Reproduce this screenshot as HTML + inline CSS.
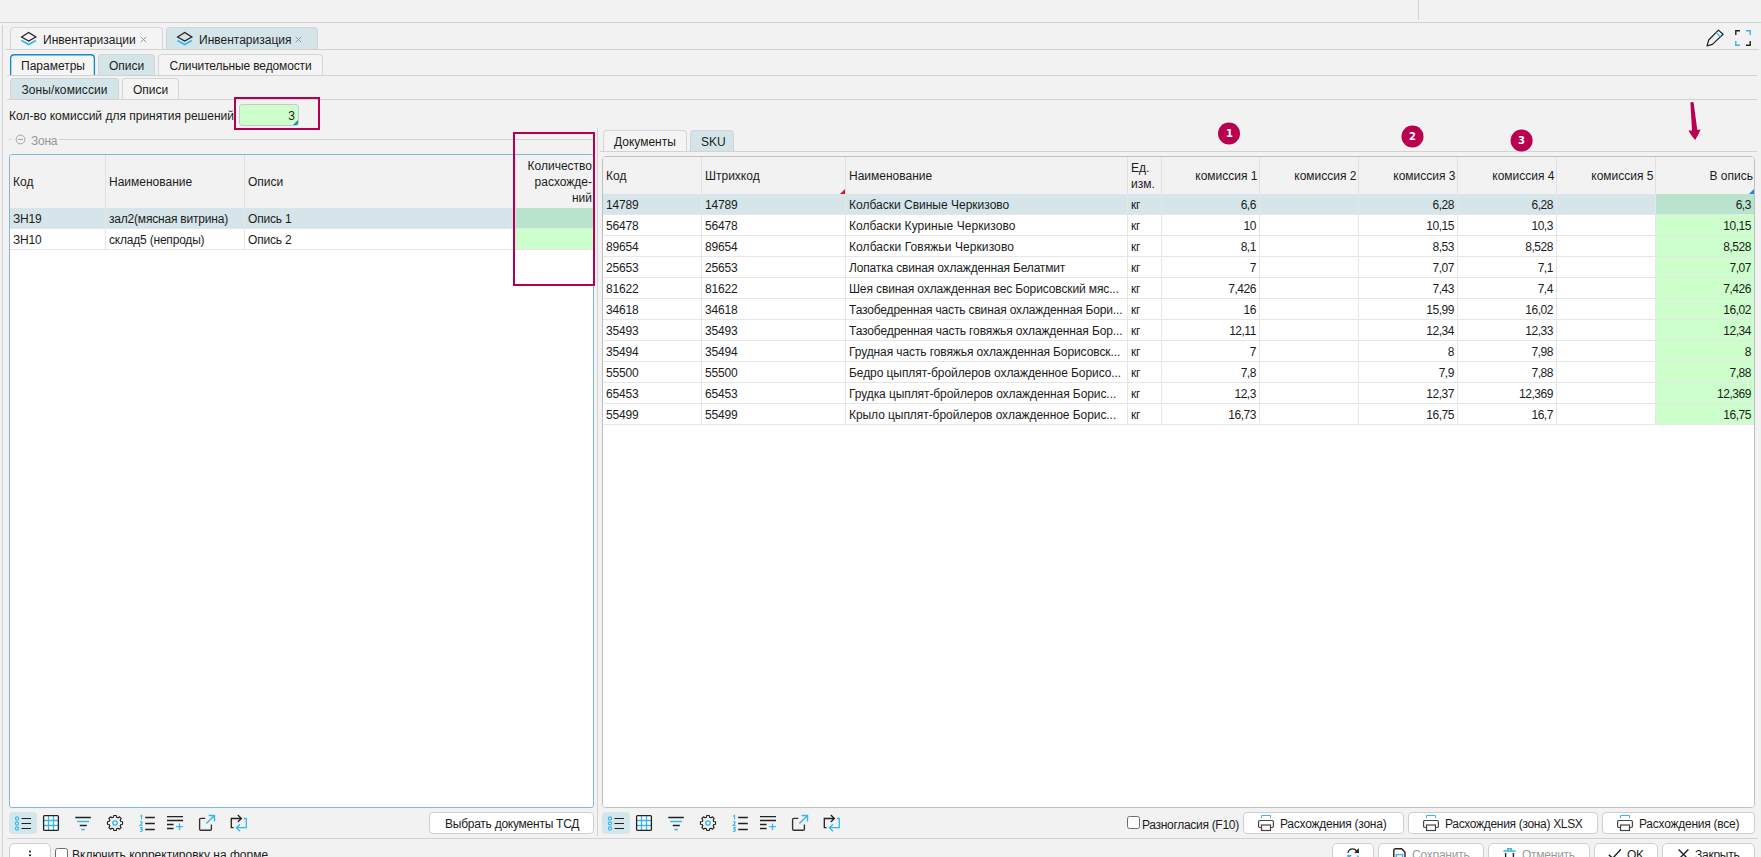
<!DOCTYPE html>
<html lang="ru"><head><meta charset="utf-8"><title>Инвентаризация</title>
<style>
*{box-sizing:border-box;margin:0;padding:0}
html,body{width:1761px;height:857px;overflow:hidden;background:#f2f2f2}
body{position:relative;font-family:"Liberation Sans",sans-serif;font-size:12px;color:#1c1c1c;line-height:14px}
.a{position:absolute}
svg{position:absolute;overflow:visible}
.hl{position:absolute;height:1px;background:#d2d2d2}
.vl{position:absolute;width:1px;background:#d2d2d2}
.tab{position:absolute;border:1px solid #d6d6d6;border-bottom:none;border-radius:4px 4px 0 0;background:#f4f4f4;white-space:nowrap}
.tab.sel{background:#d4e5ea;border-color:#d2d5d6}
.tab span.t{position:absolute;top:4px;white-space:nowrap}
.tab.ct{text-align:center}
.tab.ct span.t{left:0;right:0}
.grid{position:absolute;background:#fff;border-radius:3px;overflow:hidden}
.hd{position:absolute;left:0;top:0;right:0;background:#f2f2f2}
.hc{position:absolute;top:0;bottom:0;border-right:1px solid #e0e0e0;white-space:nowrap}
.hc span{position:absolute;left:3px;right:3px}
.r{position:absolute;left:0;right:0;height:21px;border-bottom:1px solid #e6e6e6;background:#fff}
.r.s{background:#d5e5ea}
.c{position:absolute;top:0;height:20px;border-right:1px solid #e6e6e6;padding:4px 3px 0 3px;white-space:nowrap;overflow:hidden;line-height:14px;letter-spacing:-0.2px}
.c.n{text-align:right;letter-spacing:-0.5px;padding-right:3.2px}
.g{background:#ccffcc}
.r.s .g{background:#b9e3cd}
.btn{position:absolute;background:#fff;border:1px solid #cfcfcf;border-radius:4px;white-space:nowrap}
.btn span{position:absolute;top:4px;white-space:nowrap;letter-spacing:-0.25px}
.b2{border-radius:5px}
.dis{color:#9a9a9a}
.cb{position:absolute;width:13px;height:13px;border:1px solid #6e6e6e;border-radius:2.5px;background:#fff}
.ann{fill:#b8004f}
.k{stroke:#222;fill:none;stroke-width:1.3}
.b{stroke:#35b6f0;fill:none;stroke-width:1.3}
</style></head><body>
<!-- frame lines -->
<div class="vl" style="left:1418px;top:0;height:20px"></div>
<div class="hl" style="left:0;top:22px;width:1761px"></div>
<div class="vl" style="left:2px;top:25px;height:832px"></div>

<!-- row 1 tabs -->
<div class="hl" style="left:5px;top:49px;width:1754px"></div>
<div class="tab" style="left:10px;top:27px;width:153px;height:22px"><svg style="left:9.4px;top:3.3px" width="17.4" height="15.5" viewBox="0 0 18 16"><path class="b" style="stroke-width:1.6" d="M1.5 9.8L9 14L16.5 9.8"/><path class="k" d="M1.6 6.2L9 1.6L16.4 6.2L9 10.4Z"/></svg><span class="t" style="left:32px;top:5px">Инвентаризации</span><svg style="left:129.2px;top:7.6px" width="7.2" height="7.2" viewBox="0 0 8 8"><path d="M0.8 0.8L7 7M7 0.8L0.8 7" stroke="#8c8c8c" stroke-width="1" fill="none"/></svg></div>
<div class="tab sel" style="left:166px;top:27px;width:152px;height:22px"><svg style="left:9.4px;top:3.3px" width="17.4" height="15.5" viewBox="0 0 18 16"><path class="b" style="stroke-width:1.6" d="M1.5 9.8L9 14L16.5 9.8"/><path class="k" d="M1.6 6.2L9 1.6L16.4 6.2L9 10.4Z"/></svg><span class="t" style="left:32px;top:5px">Инвентаризация</span><svg style="left:128.4px;top:7.6px" width="7.2" height="7.2" viewBox="0 0 8 8"><path d="M0.8 0.8L7 7M7 0.8L0.8 7" stroke="#8c8c8c" stroke-width="1" fill="none"/></svg></div>

<!-- top right icons -->
<svg style="left:1706px;top:29px" width="18" height="18" viewBox="0 0 18 18"><path class="k" style="stroke-width:1.2" d="M12.4 1.1L17.1 5.3L6.4 15.4L1 16.9L2.7 11Z" stroke-linejoin="round"/><path class="b" style="stroke-width:1.2" d="M10.2 3.6L14.5 8"/></svg>
<svg style="left:1735px;top:30px" width="16" height="16" viewBox="0 0 16 16"><path class="k" style="stroke-width:1.4" d="M0.8 5V0.8H5M15.2 11V15.2H11"/><path class="b" style="stroke-width:1.4" d="M11 0.8H15.2V5M5 15.2H0.8V11"/></svg>

<!-- row 2 tabs -->
<div class="hl" style="left:7px;top:75px;width:1750px"></div>
<div class="tab" style="left:10px;top:54px;width:85px;height:21px;border:none;background:none"><svg style="left:0;top:0" width="85" height="21" viewBox="0 0 85 21"><path d="M0.65 21V4.4Q0.65 0.7 4.4 0.7H80.6Q84.4 0.7 84.4 4.4V21" fill="#f5f5f5" stroke="#148cc0" stroke-width="1.35"/></svg><span class="t" style="left:11px;top:5px">Параметры</span></div>
<div class="tab sel ct" style="left:98px;top:54px;width:57px;height:21px"><span class="t">Описи</span></div>
<div class="tab ct" style="left:158px;top:54px;width:165px;height:21px"><span class="t" style="letter-spacing:-0.13px">Сличительные ведомости</span></div>

<!-- row 3 tabs -->
<div class="hl" style="left:7px;top:99px;width:1750px"></div>
<div class="tab sel ct" style="left:10px;top:78px;width:109px;height:21px"><span class="t" style="letter-spacing:0.1px">Зоны/комиссии</span></div>
<div class="tab ct" style="left:122px;top:78px;width:57px;height:21px"><span class="t">Описи</span></div>

<!-- commission count -->
<div class="a" style="left:9px;top:109px;white-space:nowrap">Кол-во комиссий для принятия решений</div>
<div class="a" style="left:239px;top:104px;width:60px;height:22px;background:#ccffcc;border:1px solid #c9c9c9;border-radius:3px;overflow:hidden"><span class="a" style="right:3px;top:4px">3</span><svg style="right:0;bottom:0" width="5" height="5"><path d="M5 0V5H0Z" fill="#1e88c7"/></svg></div>
<!-- group "Зона" -->
<div class="hl" style="left:9px;top:139px;width:2px"></div>
<div class="hl" style="left:59px;top:139px;width:535px"></div>
<svg style="left:15px;top:134px" width="11" height="11" viewBox="0 0 11 11"><circle cx="5.5" cy="5.5" r="4.4" fill="none" stroke="#a6a6a6" stroke-width="1"/><path d="M3 5.5H8" stroke="#a6a6a6" stroke-width="1"/></svg>
<div class="a" style="left:31px;top:134px;color:#969696;letter-spacing:-0.25px">Зона</div>

<!-- left grid -->
<div class="a" style="left:9px;top:154px;width:585px;height:654px;border:1px solid #7fb9d2;border-radius:3px;background:#fff"></div>
<div class="grid" style="left:10px;top:155px;width:583px;height:652px">
 <div class="hd" style="height:53px">
  <div class="hc" style="left:0;width:96px"><span style="top:20px">Код</span></div>
  <div class="hc" style="left:96px;width:139px"><span style="top:20px">Наименование</span></div>
  <div class="hc" style="left:235px;width:271px"><span style="top:20px">Описи</span></div>
  <div class="hc" style="left:506px;width:77px;border-right:none"><span style="top:3px;line-height:16px;text-align:right;white-space:normal;right:1px">Количество расхожде-<br>ний</span></div>
 </div>
 <div class="r s" style="top:53px"><div class="c" style="left:0;width:96px">ЗН19</div><div class="c" style="left:96px;width:139px">зал2(мясная витрина)</div><div class="c" style="left:235px;width:271px">Опись 1</div><div class="c g" style="left:506px;width:77px;border-right:none"></div></div>
 <div class="r" style="top:74px"><div class="c" style="left:0;width:96px">ЗН10</div><div class="c" style="left:96px;width:139px">склад5 (непроды)</div><div class="c" style="left:235px;width:271px">Опись 2</div><div class="c g" style="left:506px;width:77px;border-right:none"></div></div>
</div>

<!-- left toolbar -->
<div class="a" style="left:9px;top:812px;width:250px;height:22px">
<div class="a" style="left:0;top:0;width:28px;height:22px;background:#d3e6eb;border-radius:4px"></div>
<svg style="left:0;top:0" width="250" height="22" viewBox="0 0 250 22">
<!-- list -->
<g class="b" style="stroke-width:1.1"><circle cx="8" cy="6.5" r="1.6"/><circle cx="8" cy="11.5" r="1.6"/><circle cx="8" cy="16.5" r="1.6"/></g>
<path class="k" style="stroke-width:1.15" d="M12.5 6.5H22M12.5 11.5H22M12.5 16.5H22"/>
<!-- grid -->
<rect x="34.6" y="3.6" width="14.8" height="14.8" rx="1" fill="#fff" stroke="none"/>
<path class="b" d="M39.5 4V18M44.5 4V18M35 8.5H49M35 13.5H49"/>
<rect class="k" x="34.6" y="3.6" width="14.8" height="14.8" rx="1"/>
<!-- filter -->
<path class="k" d="M66.3 5.5H81.8M70.8 13.5H77.8"/><path class="b" d="M68.2 9.5H80M72.3 17.5H75.8"/>
<!-- gear -->
<path class="k" stroke-linejoin="round" style="stroke-width:1.15" d="M104.46 5.20L104.81 3.49L107.19 3.49L107.54 5.20L109.01 5.81L110.47 4.85L112.15 6.53L111.19 7.99L111.80 9.46L113.51 9.81L113.51 12.19L111.80 12.54L111.19 14.01L112.15 15.47L110.47 17.15L109.01 16.19L107.54 16.80L107.19 18.51L104.81 18.51L104.46 16.80L102.99 16.19L101.53 17.15L99.85 15.47L100.81 14.01L100.20 12.54L98.49 12.19L98.49 9.81L100.20 9.46L100.81 7.99L99.85 6.53L101.53 4.85L102.99 5.81Z"/>
<circle class="b" cx="106" cy="11" r="2.2" style="stroke-width:1.3"/>
<!-- numbered -->
<path class="k" d="M136.2 5.5H145.8M136.2 11.5H145.8M136.2 17.5H145.8"/>
<path class="b" style="stroke-width:1.1" d="M131.3 4.4L132.6 3.4V7.6M131.2 10.2Q132.4 9 133.2 10.2Q133.4 11.2 131.2 13.4H133.6M131.2 15.6H133.2L132.2 17.2Q133.6 17.4 133.3 18.6Q132.6 19.8 131.1 19.2"/>
<!-- lines plus -->
<path class="k" d="M158 4.6H174M158 8.5H174M158 12.5H164.6M158 16.5H164.6"/><path class="b" d="M167.2 14.7H173.8M170.5 11.4V18"/>
<!-- export -->
<path class="k" style="stroke-width:1.35;stroke:#333" d="M196.3 6.4H191.8Q190.6 6.4 190.6 7.6V17Q190.6 18.2 191.8 18.2H201.2Q202.4 18.2 202.4 17V12.4"/>
<path class="b" style="stroke-width:1.4" d="M197.4 11.6L205.2 3.8M199.6 3.5H205.5V9.4"/>
<!-- repeat -->
<path class="k" d="M224.6 15.7H222.3V6.5H232.2M228.8 3L232.4 6.5L228.8 10"/>
<path class="b" d="M235 6.5H237.3V15.7H227.6M231 12.2L227.4 15.7L231 19.2"/>
</svg>
</div>
<div class="btn" style="left:429px;top:812px;width:165px;height:22px"><span style="left:15px">Выбрать документы ТСД</span></div>
<!-- right tabs -->
<div class="hl" style="left:600px;top:151px;width:1157px"></div>
<div class="tab" style="left:603px;top:130px;width:84px;height:21px"><span class="t" style="left:10px">Документы</span></div>
<div class="tab sel" style="left:690px;top:130px;width:44px;height:21px"><span class="t" style="left:10px">SKU</span></div>
<!-- right grid -->
<div class="a" style="left:602px;top:156px;width:1153px;height:652px;border:1px solid #bfbfbf;border-radius:4px;background:#fff"></div>
<div class="grid" style="left:603px;top:157px;width:1151px;height:650px">
 <div class="hd" style="height:37px">
  <div class="hc" style="left:0px;width:99px"><span style="top:12px">Код</span></div>
  <div class="hc" style="left:99px;width:144px"><span style="top:12px">Штрихкод</span><svg style="right:0;bottom:0" width="5" height="5"><path d="M5 0V5H0Z" fill="#e8101c"/></svg></div>
  <div class="hc" style="left:243px;width:282px"><span style="top:12px">Наименование</span></div>
  <div class="hc" style="left:525px;width:34px"><span style="top:3px;line-height:16px">Ед.<br>изм.</span></div>
  <div class="hc" style="left:559px;width:98px"><span style="top:12px;text-align:right;right:1.5px">комиссия 1</span></div>
  <div class="hc" style="left:657px;width:99px"><span style="top:12px;text-align:right;right:1.5px">комиссия 2</span></div>
  <div class="hc" style="left:756px;width:99px"><span style="top:12px;text-align:right;right:1.5px">комиссия 3</span></div>
  <div class="hc" style="left:855px;width:99px"><span style="top:12px;text-align:right;right:1.5px">комиссия 4</span></div>
  <div class="hc" style="left:954px;width:99px"><span style="top:12px;text-align:right;right:1.5px">комиссия 5</span></div>
  <div class="hc" style="left:1053px;width:98px;border-right:none"><span style="top:12px;text-align:right;right:1px">В опись</span><svg style="right:0;bottom:0" width="5" height="5"><path d="M5 0V5H0Z" fill="#1e88c7"/></svg></div>
 </div>
 <div class="r s" style="top:37px"><div class="c" style="left:0px;width:99px">14789</div><div class="c" style="left:99px;width:144px">14789</div><div class="c nm" style="left:243px;width:282px;letter-spacing:0.0px">Колбаски Свиные Черкизово</div><div class="c" style="left:525px;width:34px">кг</div><div class="c n" style="left:559px;width:98px">6,6</div><div class="c n" style="left:657px;width:99px"></div><div class="c n" style="left:756px;width:99px">6,28</div><div class="c n" style="left:855px;width:99px">6,28</div><div class="c n" style="left:954px;width:99px"></div><div class="c n g" style="left:1053px;width:98px;border-right:none">6,3</div></div>
 <div class="r" style="top:58px"><div class="c" style="left:0px;width:99px">56478</div><div class="c" style="left:99px;width:144px">56478</div><div class="c nm" style="left:243px;width:282px;letter-spacing:0.07px">Колбаски Куриные Черкизово</div><div class="c" style="left:525px;width:34px">кг</div><div class="c n" style="left:559px;width:98px">10</div><div class="c n" style="left:657px;width:99px"></div><div class="c n" style="left:756px;width:99px">10,15</div><div class="c n" style="left:855px;width:99px">10,3</div><div class="c n" style="left:954px;width:99px"></div><div class="c n g" style="left:1053px;width:98px;border-right:none">10,15</div></div>
 <div class="r" style="top:79px"><div class="c" style="left:0px;width:99px">89654</div><div class="c" style="left:99px;width:144px">89654</div><div class="c nm" style="left:243px;width:282px;letter-spacing:0.09px">Колбаски Говяжьи Черкизово</div><div class="c" style="left:525px;width:34px">кг</div><div class="c n" style="left:559px;width:98px">8,1</div><div class="c n" style="left:657px;width:99px"></div><div class="c n" style="left:756px;width:99px">8,53</div><div class="c n" style="left:855px;width:99px">8,528</div><div class="c n" style="left:954px;width:99px"></div><div class="c n g" style="left:1053px;width:98px;border-right:none">8,528</div></div>
 <div class="r" style="top:100px"><div class="c" style="left:0px;width:99px">25653</div><div class="c" style="left:99px;width:144px">25653</div><div class="c nm" style="left:243px;width:282px;letter-spacing:-0.163px">Лопатка свиная охлажденная Белатмит</div><div class="c" style="left:525px;width:34px">кг</div><div class="c n" style="left:559px;width:98px">7</div><div class="c n" style="left:657px;width:99px"></div><div class="c n" style="left:756px;width:99px">7,07</div><div class="c n" style="left:855px;width:99px">7,1</div><div class="c n" style="left:954px;width:99px"></div><div class="c n g" style="left:1053px;width:98px;border-right:none">7,07</div></div>
 <div class="r" style="top:121px"><div class="c" style="left:0px;width:99px">81622</div><div class="c" style="left:99px;width:144px">81622</div><div class="c nm" style="left:243px;width:282px;letter-spacing:-0.124px">Шея свиная охлажденная вес Борисовский мяс...</div><div class="c" style="left:525px;width:34px">кг</div><div class="c n" style="left:559px;width:98px">7,426</div><div class="c n" style="left:657px;width:99px"></div><div class="c n" style="left:756px;width:99px">7,43</div><div class="c n" style="left:855px;width:99px">7,4</div><div class="c n" style="left:954px;width:99px"></div><div class="c n g" style="left:1053px;width:98px;border-right:none">7,426</div></div>
 <div class="r" style="top:142px"><div class="c" style="left:0px;width:99px">34618</div><div class="c" style="left:99px;width:144px">34618</div><div class="c nm" style="left:243px;width:282px;letter-spacing:-0.154px">Тазобедренная часть свиная охлажденная Бори...</div><div class="c" style="left:525px;width:34px">кг</div><div class="c n" style="left:559px;width:98px">16</div><div class="c n" style="left:657px;width:99px"></div><div class="c n" style="left:756px;width:99px">15,99</div><div class="c n" style="left:855px;width:99px">16,02</div><div class="c n" style="left:954px;width:99px"></div><div class="c n g" style="left:1053px;width:98px;border-right:none">16,02</div></div>
 <div class="r" style="top:163px"><div class="c" style="left:0px;width:99px">35493</div><div class="c" style="left:99px;width:144px">35493</div><div class="c nm" style="left:243px;width:282px;letter-spacing:-0.126px">Тазобедренная часть говяжья охлажденная Бор...</div><div class="c" style="left:525px;width:34px">кг</div><div class="c n" style="left:559px;width:98px">12,11</div><div class="c n" style="left:657px;width:99px"></div><div class="c n" style="left:756px;width:99px">12,34</div><div class="c n" style="left:855px;width:99px">12,33</div><div class="c n" style="left:954px;width:99px"></div><div class="c n g" style="left:1053px;width:98px;border-right:none">12,34</div></div>
 <div class="r" style="top:184px"><div class="c" style="left:0px;width:99px">35494</div><div class="c" style="left:99px;width:144px">35494</div><div class="c nm" style="left:243px;width:282px;letter-spacing:-0.098px">Грудная часть говяжья охлажденная Борисовск...</div><div class="c" style="left:525px;width:34px">кг</div><div class="c n" style="left:559px;width:98px">7</div><div class="c n" style="left:657px;width:99px"></div><div class="c n" style="left:756px;width:99px">8</div><div class="c n" style="left:855px;width:99px">7,98</div><div class="c n" style="left:954px;width:99px"></div><div class="c n g" style="left:1053px;width:98px;border-right:none">8</div></div>
 <div class="r" style="top:205px"><div class="c" style="left:0px;width:99px">55500</div><div class="c" style="left:99px;width:144px">55500</div><div class="c nm" style="left:243px;width:282px;letter-spacing:-0.07px">Бедро цыплят-бройлеров охлажденное Борисо...</div><div class="c" style="left:525px;width:34px">кг</div><div class="c n" style="left:559px;width:98px">7,8</div><div class="c n" style="left:657px;width:99px"></div><div class="c n" style="left:756px;width:99px">7,9</div><div class="c n" style="left:855px;width:99px">7,88</div><div class="c n" style="left:954px;width:99px"></div><div class="c n g" style="left:1053px;width:98px;border-right:none">7,88</div></div>
 <div class="r" style="top:226px"><div class="c" style="left:0px;width:99px">65453</div><div class="c" style="left:99px;width:144px">65453</div><div class="c nm" style="left:243px;width:282px;letter-spacing:-0.082px">Грудка цыплят-бройлеров охлажденная Борис...</div><div class="c" style="left:525px;width:34px">кг</div><div class="c n" style="left:559px;width:98px">12,3</div><div class="c n" style="left:657px;width:99px"></div><div class="c n" style="left:756px;width:99px">12,37</div><div class="c n" style="left:855px;width:99px">12,369</div><div class="c n" style="left:954px;width:99px"></div><div class="c n g" style="left:1053px;width:98px;border-right:none">12,369</div></div>
 <div class="r" style="top:247px"><div class="c" style="left:0px;width:99px">55499</div><div class="c" style="left:99px;width:144px">55499</div><div class="c nm" style="left:243px;width:282px;letter-spacing:-0.063px">Крыло цыплят-бройлеров охлажденное Борис...</div><div class="c" style="left:525px;width:34px">кг</div><div class="c n" style="left:559px;width:98px">16,73</div><div class="c n" style="left:657px;width:99px"></div><div class="c n" style="left:756px;width:99px">16,75</div><div class="c n" style="left:855px;width:99px">16,7</div><div class="c n" style="left:954px;width:99px"></div><div class="c n g" style="left:1053px;width:98px;border-right:none">16,75</div></div>
</div>
<!-- splitter -->
<div class="vl" style="left:597px;top:128px;height:708px"></div>
<!-- right toolbar -->
<div class="a" style="left:602px;top:812px;width:250px;height:22px">
<div class="a" style="left:0;top:0;width:28px;height:22px;background:#d3e6eb;border-radius:4px"></div>
<svg style="left:0;top:0" width="250" height="22" viewBox="0 0 250 22">
<!-- list -->
<g class="b" style="stroke-width:1.1"><circle cx="8" cy="6.5" r="1.6"/><circle cx="8" cy="11.5" r="1.6"/><circle cx="8" cy="16.5" r="1.6"/></g>
<path class="k" style="stroke-width:1.15" d="M12.5 6.5H22M12.5 11.5H22M12.5 16.5H22"/>
<!-- grid -->
<rect x="34.6" y="3.6" width="14.8" height="14.8" rx="1" fill="#fff" stroke="none"/>
<path class="b" d="M39.5 4V18M44.5 4V18M35 8.5H49M35 13.5H49"/>
<rect class="k" x="34.6" y="3.6" width="14.8" height="14.8" rx="1"/>
<!-- filter -->
<path class="k" d="M66.3 5.5H81.8M70.8 13.5H77.8"/><path class="b" d="M68.2 9.5H80M72.3 17.5H75.8"/>
<!-- gear -->
<path class="k" stroke-linejoin="round" style="stroke-width:1.15" d="M104.46 5.20L104.81 3.49L107.19 3.49L107.54 5.20L109.01 5.81L110.47 4.85L112.15 6.53L111.19 7.99L111.80 9.46L113.51 9.81L113.51 12.19L111.80 12.54L111.19 14.01L112.15 15.47L110.47 17.15L109.01 16.19L107.54 16.80L107.19 18.51L104.81 18.51L104.46 16.80L102.99 16.19L101.53 17.15L99.85 15.47L100.81 14.01L100.20 12.54L98.49 12.19L98.49 9.81L100.20 9.46L100.81 7.99L99.85 6.53L101.53 4.85L102.99 5.81Z"/>
<circle class="b" cx="106" cy="11" r="2.2" style="stroke-width:1.3"/>
<!-- numbered -->
<path class="k" d="M136.2 5.5H145.8M136.2 11.5H145.8M136.2 17.5H145.8"/>
<path class="b" style="stroke-width:1.1" d="M131.3 4.4L132.6 3.4V7.6M131.2 10.2Q132.4 9 133.2 10.2Q133.4 11.2 131.2 13.4H133.6M131.2 15.6H133.2L132.2 17.2Q133.6 17.4 133.3 18.6Q132.6 19.8 131.1 19.2"/>
<!-- lines plus -->
<path class="k" d="M158 4.6H174M158 8.5H174M158 12.5H164.6M158 16.5H164.6"/><path class="b" d="M167.2 14.7H173.8M170.5 11.4V18"/>
<!-- export -->
<path class="k" style="stroke-width:1.35;stroke:#333" d="M196.3 6.4H191.8Q190.6 6.4 190.6 7.6V17Q190.6 18.2 191.8 18.2H201.2Q202.4 18.2 202.4 17V12.4"/>
<path class="b" style="stroke-width:1.4" d="M197.4 11.6L205.2 3.8M199.6 3.5H205.5V9.4"/>
<!-- repeat -->
<path class="k" d="M224.6 15.7H222.3V6.5H232.2M228.8 3L232.4 6.5L228.8 10"/>
<path class="b" d="M235 6.5H237.3V15.7H227.6M231 12.2L227.4 15.7L231 19.2"/>
</svg>
</div>
<div class="cb" style="left:1127px;top:816px"></div>
<div class="a" style="left:1142px;top:818px;white-space:nowrap;letter-spacing:-0.3px">Разногласия (F10)</div>
<div class="btn" style="left:1243px;top:812px;width:161px;height:22px"><svg style="left:14px;top:2px" width="16" height="16" viewBox="0 0 16 16"><path class="b" style="stroke-width:1" d="M3.5 3.2V0.5H12.5V3.2"/><path class="k" style="stroke-width:1.2;stroke:#444" d="M3.5 12.5H1.8Q0.6 12.5 0.6 11.3V6.7Q0.6 5.5 1.8 5.5H14.2Q15.4 5.5 15.4 6.7V11.3Q15.4 12.5 14.2 12.5H12.5"/><rect class="k" style="stroke-width:1.2;stroke:#444" x="3.5" y="10" width="9" height="5.5" fill="#fff"/></svg><span style="left:36px">Расхождения (зона)</span></div>
<div class="btn" style="left:1408px;top:812px;width:190px;height:22px"><svg style="left:14px;top:2px" width="16" height="16" viewBox="0 0 16 16"><path class="b" style="stroke-width:1" d="M3.5 3.2V0.5H12.5V3.2"/><path class="k" style="stroke-width:1.2;stroke:#444" d="M3.5 12.5H1.8Q0.6 12.5 0.6 11.3V6.7Q0.6 5.5 1.8 5.5H14.2Q15.4 5.5 15.4 6.7V11.3Q15.4 12.5 14.2 12.5H12.5"/><rect class="k" style="stroke-width:1.2;stroke:#444" x="3.5" y="10" width="9" height="5.5" fill="#fff"/></svg><span style="left:36px;letter-spacing:-0.32px">Расхождения (зона) XLSX</span></div>
<div class="btn" style="left:1602px;top:812px;width:153px;height:22px"><svg style="left:14px;top:2px" width="16" height="16" viewBox="0 0 16 16"><path class="b" style="stroke-width:1" d="M3.5 3.2V0.5H12.5V3.2"/><path class="k" style="stroke-width:1.2;stroke:#444" d="M3.5 12.5H1.8Q0.6 12.5 0.6 11.3V6.7Q0.6 5.5 1.8 5.5H14.2Q15.4 5.5 15.4 6.7V11.3Q15.4 12.5 14.2 12.5H12.5"/><rect class="k" style="stroke-width:1.2;stroke:#444" x="3.5" y="10" width="9" height="5.5" fill="#fff"/></svg><span style="left:36px">Расхождения (все)</span></div>
<!-- annotations -->
<div class="a" style="left:234px;top:97px;width:86px;height:33px;border:2px solid #b5004f"></div>
<div class="a" style="left:513px;top:132px;width:82px;height:154px;border:2px solid #b5004f"></div>
<svg style="left:0;top:0" width="1761" height="160" viewBox="0 0 1761 160">
<circle class="ann" cx="1229" cy="133.5" r="11"/>
<circle class="ann" cx="1412.5" cy="136.5" r="11"/>
<circle class="ann" cx="1521.6" cy="140.5" r="11"/>
<g font-family="'DejaVu Sans','Liberation Sans',sans-serif" font-weight="bold" font-size="10" fill="#fff" text-anchor="middle">
<text x="1229.4" y="137.2">1</text><text x="1412.5" y="140.2">2</text><text x="1521.6" y="144.2">3</text></g>
<path class="ann" d="M1690.4 102.6Q1692 101.2 1693.6 102.6L1697.3 130L1700.6 129.4Q1698.2 135 1695.2 140Q1691.4 135.8 1688.4 130.4L1692 130.4Z"/>
</svg>
<!-- bottom bar -->
<div class="hl" style="left:7px;top:838px;width:1751px"></div>
<div class="btn b2" style="left:9px;top:843px;width:42px;height:26px"><svg style="left:18px;top:6px" width="4" height="12"><circle cx="2" cy="1.5" r="1" fill="#111"/><circle cx="2" cy="5.3" r="1" fill="#111"/></svg></div>
<div class="cb" style="left:55px;top:848px"></div>
<div class="a" style="left:72px;top:848px;white-space:nowrap">Включить корректировку на форме</div>

<div class="btn b2" style="left:1332px;top:843px;width:42px;height:26px"><svg style="left:14px;top:4px" width="13" height="14" viewBox="0 0 13 14"><path class="k" style="stroke-width:1.4" d="M0.9 4.7Q2.2 0.9 5.6 0.9Q8 0.9 9.6 3"/><path d="M11.8 0L12 4.9L7.2 4.9Z" fill="#222"/><path d="M0.2 7.1L5 7.1L0.4 12Z" fill="#35b6f0"/><path class="b" style="stroke-width:1.4" d="M11.3 7.4Q10 11.2 6.6 11.2Q4.2 11.2 2.6 9.1"/></svg></div>
<div class="btn b2 dis" style="left:1378px;top:843px;width:106px;height:26px"><svg style="left:14px;top:4px" width="13" height="14" viewBox="0 0 13 14"><path class="k" style="stroke-width:1.4" d="M0.8 14V2.8Q0.8 0.8 2.8 0.8H8.6L12 4.2V14"/><rect class="b" style="stroke-width:1.4" x="3.2" y="6.6" width="6.4" height="6"/></svg><span style="left:33px;top:4px">Сохранить</span></div>
<div class="btn b2 dis" style="left:1488px;top:843px;width:102px;height:26px"><svg style="left:14px;top:4px" width="13" height="14" viewBox="0 0 13 14"><path class="b" style="stroke-width:1.4" d="M0.4 3H12.6M4.8 3V0.8H8.2V3"/><path class="k" style="stroke-width:1.4" d="M2.6 5V14M10.4 5V14"/></svg><span style="left:33px;top:4px">Отменить</span></div>
<div class="btn b2" style="left:1594px;top:843px;width:64px;height:26px"><svg style="left:14px;top:5px" width="14" height="12" viewBox="0 0 14 12"><path class="k" style="stroke-width:1.4" d="M-0.2 5.9L3.8 9.2L11.9 0.2"/></svg><span style="left:32px;top:4px">OK</span></div>
<div class="btn b2" style="left:1662px;top:843px;width:93px;height:26px"><svg style="left:15px;top:5px" width="11" height="11" viewBox="0 0 11 11"><path class="k" style="stroke-width:1.4" d="M0.6 0.4L10.4 10.4M10.4 0.4L0.6 10.4"/></svg><span style="left:32px;top:4px">Закрыть</span></div>
</body></html>
